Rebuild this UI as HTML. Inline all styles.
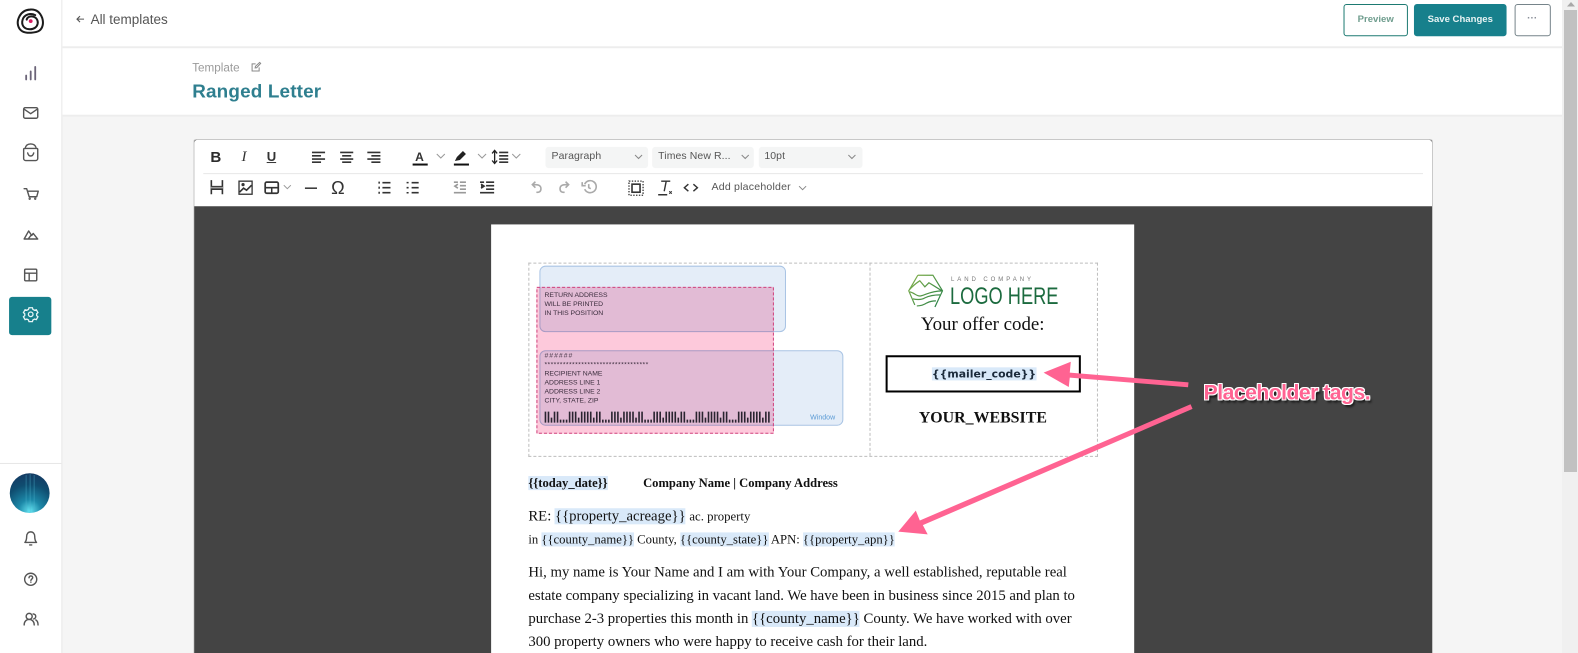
<!DOCTYPE html>
<html lang="en"><head><meta charset="utf-8"><title>Ranged Letter</title>
<style>
html,body{margin:0;padding:0;width:1578px;height:653px;overflow:hidden;background:#f5f5f5}
body{position:relative;font-family:"Liberation Sans",sans-serif;color:#444}
#w{position:absolute;left:0;top:0;width:1568px;height:650px;transform:scale(1.00638);transform-origin:0 0;filter:blur(.3px)}
.a{position:absolute;white-space:nowrap}
svg{position:absolute;overflow:visible}
.ic{fill:none;stroke:#555;stroke-width:1.4;stroke-linecap:round;stroke-linejoin:round}
.tb{fill:none;stroke:#333;stroke-width:1.6}
.serif{font-family:"Liberation Serif",serif;color:#111}
.tag{background:#d9e9f9}
.sel{background:#f4f5f5;border-radius:3px;height:20.5px;top:146px;font-size:10.4px;line-height:20px;color:#555;letter-spacing:.1px}
.env{font-size:6.8px;line-height:8.9px;color:#3a2c3c;font-family:"Liberation Sans",sans-serif}
</style></head><body>
<div id="w">

<!-- sidebar -->
<div class="a" style="left:0;top:0;width:61px;height:653px;background:#fff;border-right:1px solid #e6e6e6"></div>
<div class="a" style="left:0;top:460px;width:61px;height:1px;background:#e6e6e6"></div>
<svg style="left:0;top:0" width="61" height="653" viewBox="0 0 61 653">
<g fill="none" stroke="#1b1b1b" stroke-width="2" stroke-linecap="round"><path d="M30 9.5c6-.5 10 3 12 8.500 1.500 5 .5 10-3 12.500-3.500 2.200-12.500 3-17 .5-4-2.500-5.500-8-3.500-13 2-5 6-8.200 11.500-8.500z"/><path d="M35 15c-5-2.500-11-.5-12.500 4.500-1.500 5 1 9 6 9.500 5 .5 8.500-2 9-6 .3-3-1.500-5.500-4.500-6.500-3-.8-6 .5-6.500 3"/></g>
<circle cx="30.500" cy="21" r="1.900" fill="#d81b60"/>
<g class="ic" stroke="#5f5f6b">
<path d="M26 79v-4M30.500 79v-8M35 79V66.500" stroke="#6b6478" stroke-width="1.800"/>
<rect x="23.500" y="107" width="14" height="10.500" rx="1.500"/><path d="M24 108.500l6.500 4.500 6.500-4.500"/>
<path d="M24.500 147.500h12a1 1 0 0 1 1 1v9a2 2 0 0 1-2 2h-10a2 2 0 0 1-2-2v-9a1 1 0 0 1 1-1z"/><path d="M25 147.500c.5-3 2.500-4.500 5.500-4.500s5 1.500 5.500 4.500M27.500 152c.5 2 1.700 3 3 3s2.500-1 3-3"/>
<path d="M24 187.500h2.500l2.500 8h7.500l1.500-5.500h-10.700"/><circle cx="29.500" cy="197.500" r=".5"/><circle cx="35" cy="197.500" r=".5"/>
<path d="M24 237.500l4.500-8 3 4.500 1.500-2 4.500 5.500zM28 237.500l3-4"/>
<rect x="24.500" y="267.500" width="12" height="11.500" rx="1"/><path d="M24.500 271.500h12M29 271.500v7.500"/>
<path d="M30.500 528.500c-2.500 0-4 2-4 4.500 0 3-.8 5-1.800 6h11.600c-1-1-1.800-3-1.800-6 0-2.500-1.500-4.500-4-4.500z"/><path d="M29.500 541.500h2"/>
<circle cx="30.500" cy="575.600" r="6"/><path d="M28.800 574.100c.2-1.200 1-1.800 1.900-1.800 1 0 1.800.7 1.800 1.700 0 1.300-1.800 1.500-1.800 2.800M30.700 578.400v.2"/>
<circle cx="29" cy="612.500" r="3"/><path d="M24 621c0-3.500 2.200-5.500 5-5.500s5 2 5 5.500M33 610c1.800.2 2.500 1.300 2.500 2.500s-.8 2.200-2 2.500M35.500 616c1.500.8 2.300 2.500 2.300 5"/>
</g>
<rect x="9" y="295" width="42" height="38" rx="3" fill="#17808c"/>
<g fill="none" stroke="#e6f4f5" stroke-width="1.300" transform="translate(0 -1.700)"><circle cx="30.500" cy="314" r="2.300"/><path d="M28.800 307.500h3.400l.5 1.700 1.600.8 1.800-.5 1.600 2.800-1.300 1.200v1.800l1.300 1.200-1.600 2.800-1.800-.5-1.600.8-.5 1.700h-3.400l-.5-1.700-1.600-.8-1.800.5-1.600-2.800 1.300-1.200v-1.800l-1.300-1.200 1.600-2.800 1.800.5 1.600-.8z"/></g>
<defs><radialGradient id="av" cx=".5" cy=".95" r=".95"><stop offset="0" stop-color="#64e4f2"/><stop offset=".3" stop-color="#1c88a8"/><stop offset=".7" stop-color="#0f4d70"/><stop offset="1" stop-color="#143a63"/></radialGradient></defs>
<circle cx="29.500" cy="490" r="19.800" fill="url(#av)"/>
<path d="M26 472v36M30 471v38M34 472v36" stroke="#4fb3cc" stroke-opacity=".3" stroke-width="1.300"/>
</svg>

<!-- top bar -->
<div class="a" style="left:62px;top:0;width:1492px;height:46px;background:#fff;border-bottom:2px solid #ededed"></div>
<div class="a" style="left:62px;top:48px;width:1492px;height:66px;background:#fff;border-bottom:2px solid #ededed"></div>
<svg style="left:75px;top:14px" width="10" height="10" viewBox="0 0 10 10"><path d="M8.500 5H1.500M4.500 2 1.500 5l3 3" fill="none" stroke="#555" stroke-width="1.100"/></svg>
<div class="a" style="left:90px;top:12px;font-size:13.4px;line-height:16px;color:#555">All templates</div>
<div class="a" style="left:191px;top:61px;font-size:11.6px;line-height:14px;color:#9a9a9a">Template</div>
<svg style="left:249px;top:61px" width="11" height="11" viewBox="0 0 11 11"><path d="M8.500 6v3.500h-7v-7H5M4.500 6.500l.3-1.500L9 1l1 1-4 4.300z" fill="none" stroke="#888" stroke-width="1"/></svg>
<div class="a" style="left:191px;top:79px;font-size:18.8px;line-height:24px;font-weight:bold;color:#2f7f8f;letter-spacing:.15px">Ranged Letter</div>

<div class="a" style="left:1335px;top:4px;width:62px;height:30px;border:1px solid #1d7a72;border-radius:3px;background:#fff;text-align:center;font-size:9.500px;line-height:30px;font-weight:bold;color:#6f9d8e">Preview</div>
<div class="a" style="left:1405px;top:4px;width:92px;height:32px;border-radius:3px;background:#17808c;text-align:center;font-size:9.500px;line-height:31px;font-weight:bold;color:#e8f3f4">Save Changes</div>
<div class="a" style="left:1504.500px;top:4px;width:34px;height:30px;border:1px solid #76848a;border-radius:3px;background:#fff;text-align:center;font-size:10px;line-height:28px;font-weight:bold;color:#8a8f99">···</div>

<!-- editor -->
<div class="a" style="left:192px;top:137.500px;width:1230px;height:516px;background:#444;border:1px solid #cfcfcf;border-bottom:0;border-radius:3px 3px 0 0;box-sizing:content-box"></div>
<div class="a" style="left:193px;top:138.500px;width:1230px;height:66px;background:#fff;border-radius:3px 3px 0 0"></div>
<div class="a" style="left:202px;top:171.500px;width:1212px;height:1px;background:#e8e8e8"></div>

<!-- toolbar -->
<div class="a" style="left:209px;top:148px;font-size:15px;line-height:17px;font-weight:bold;color:#2c2c2c">B</div>
<div class="a serif" style="left:240px;top:148px;font-size:15px;line-height:17px;font-style:italic;color:#333">I</div>
<div class="a" style="left:265px;top:148px;font-size:13px;line-height:15px;font-weight:bold;color:#333;text-decoration:underline">U</div>
<svg style="left:0;top:0" width="1000" height="205" viewBox="0 0 1000 205">
<g class="tb" stroke-width="1.400">
<path d="M310 151.500h13M310 154.800h9M310 158h13M310 161.200h9"/>
<path d="M338 151.500h13M340 154.800h9M338 158h13M340 161.200h9"/>
<path d="M365 151.500h13M369 154.800h9M365 158h13M369 161.200h9"/>
<path d="M434 153l4 4 4-4M475 153l4 4 4-4M509 153l4 4 4-4M282 184l3.500 3.500 3.500-3.500" stroke="#999" stroke-width="1"/>
<path d="M496 151.500h9M496 154.800h9M496 158h9M496 161.200h9"/>
</g>
<path d="M410 163.500h15" stroke="#111" stroke-width="2"/>
<text x="412.500" y="160" font-family="Liberation Sans" font-size="12" font-weight="bold" fill="#333">A</text>
<path d="M451 163.500h15" stroke="#111" stroke-width="2"/>
<path d="M452 160l2-4 6-6 3 3-6 6zM452 160.500h3" fill="#222"/>
<path d="M491.500 150v12M489 152.500l2.500-3 2.500 3M489 159.500l2.500 3 2.500-3" fill="none" stroke="#222" stroke-width="1.300"/>
<!-- row 2 -->
<g class="tb" stroke-width="1.300">
<path d="M210 179v6.500h11V179M210 193v-5h11v5" />
<path d="M209 186.500h13" stroke="#999"/>
<rect x="237.500" y="180" width="13" height="13" stroke-width="1.300"/><path d="M238 191l4-4 3 2 5-5"/><circle cx="241.500" cy="183.500" r=".8"/>
<rect x="263.500" y="181" width="13" height="11" rx="1.500" stroke-width="1.700"/><path d="M263.500 186.500h13M270 186.500v5.500" stroke-width="1.500"/>
<path d="M303 187h12" stroke-width="1.500"/>
<path d="M380 181.500h8M380 186.500h8M380 191.500h8M409 181.500h7M409 186.500h7M409 191.500h7"/>
<path d="M376 181.500h1.500M376 186.500h1.500M376 191.500h1.500" stroke-width="2"/>
<path d="M404 181.500h2M404 186.500h2M404 191.500h2" stroke-width="1.500"/>
<path d="M457 181h6M457 184.500h6M457 188h6M451 191.500h12M451 181h4" stroke="#999"/><path d="M455 183l-3 2 3 2" stroke="#999"/>
<path d="M483 181h8M483 184.500h8M483 188h8M477 191.500h14M477 181h4"/><path d="M478 183l3 2-3 2" fill="#333"/>
<g stroke="#aaa"><path d="M533 191c3 .5 4.500-1 4.500-3.500 0-3-2.500-4-5-4h-3M532 180.500l-3 3 3 3"/>
<path d="M553 191c-3 .5-4.500-1-4.500-3.500 0-3 2.500-4 5-4h3M554 180.500l3 3-3 3" transform="translate(8 0)"/>
<path d="M581 183a6 6 0 1 1 0 5M578.500 181v3.500h3.500M585 183v3.500l2 1"/></g>
<rect x="628" y="183" width="8" height="8" stroke-width="1.600"/>
<rect x="625" y="180" width="14" height="14" stroke-dasharray="1.400 1.400" stroke-width="1.300"/>
<path d="M657 180h9M662 180l-2 10M654 193.500h9" stroke-width="1.400"/>
<path d="M665 190l2.500 2.500M667.500 190l-2.500 2.500" stroke-width="1"/>
<path d="M684 183l-4 3.500 4 3.500M689 183l4 3.500-4 3.500" stroke-width="1.400"/>
<path d="M794 185l3.500 3.500 3.500-3.500" stroke="#888" stroke-width="1"/>
</g>
<text x="329" y="193" font-family="Liberation Sans" font-size="18" fill="#333">Ω</text>
</svg>
<div class="a" style="left:707px;top:179px;font-size:10.500px;line-height:14px;color:#555;letter-spacing:.2px">Add placeholder</div>
<div class="a sel" style="left:542px;width:96px;padding-left:6px;">Paragraph</div>
<div class="a sel" style="left:648px;width:95px;padding-left:6px;">Times New R...</div>
<div class="a sel" style="left:753.500px;width:97px;padding-left:6px;">10pt</div>
<svg style="left:0;top:0" width="900" height="205"><path d="M631 154l3.500 3.500 3.500-3.500M737 154l3.500 3.500 3.500-3.500M843 154l3.500 3.500 3.500-3.500" fill="none" stroke="#888" stroke-width="1"/></svg>

<!-- paper -->
<div class="a" style="left:488px;top:223px;width:639px;height:430px;background:#fff"></div>
<div class="a" style="left:525px;top:261px;width:564px;height:191px;border:1px dashed #bdbdbd;box-sizing:content-box"></div>
<div class="a" style="left:864px;top:261px;width:0;height:192px;border-left:1px dashed #bdbdbd"></div>

<div class="a" style="left:536px;top:264px;width:243px;height:64px;background:#e4edf8;border:1px solid #a9c4e4;border-radius:6px;box-sizing:content-box"></div>
<div class="a" style="left:536px;top:348px;width:300px;height:73px;background:#e4edf8;border:1px solid #a9c4e4;border-radius:6px;box-sizing:content-box"></div>
<div class="a" style="left:533px;top:285px;width:236px;height:146px;background:#fdc9db;mix-blend-mode:multiply"></div>
<svg style="left:533px;top:285px" width="236" height="146"><rect x=".5" y=".5" width="235" height="145" fill="none" stroke="#d0437e" stroke-width="1" stroke-dasharray="3 2"/></svg>
<div class="a env" style="left:541px;top:290px">RETURN ADDRESS<br>WILL BE PRINTED<br>IN THIS POSITION</div>
<div class="a env" style="left:541px;top:350px;"><span style="letter-spacing:1px">######</span><br><span style="letter-spacing:.4px">**********************************</span><br>RECIPIENT NAME<br>ADDRESS LINE 1<br>ADDRESS LINE 2<br>CITY, STATE, ZIP</div>
<div class="a" style="left:805px;top:411px;font-size:7px;line-height:9px;color:#5b9bd5">Window</div>
<svg style="left:541px;top:408px" width="230" height="13" viewBox="0 0 230 13"><path stroke="#2a2430" stroke-width="1.600" d="M1 1v11M4 1v11M7 7v5M10 1v11M13 1v11M16 9v3M19 9v3M22 9v3M25 1v11M28 1v11M31 1v11M34 7v5M37 1v11M40 1v11M43 1v11M46 1v11M49 7v5M52 1v11M55 1v11M58 9v3M61 9v3M64 9v3M67 1v11M70 1v11M73 1v11M76 7v5M79 1v11M82 1v11M85 1v11M88 1v11M91 7v5M94 1v11M97 1v11M100 9v3M103 9v3M106 9v3M109 1v11M112 1v11M115 1v11M118 7v5M121 1v11M124 1v11M127 1v11M130 1v11M133 7v5M136 1v11M139 1v11M142 9v3M145 9v3M148 9v3M151 1v11M154 1v11M157 1v11M160 7v5M163 1v11M166 1v11M169 1v11M172 1v11M175 7v5M178 1v11M181 1v11M184 9v3M187 9v3M190 9v3M193 1v11M196 1v11M199 1v11M202 7v5M205 1v11M208 1v11M211 1v11M214 1v11M217 7v5M220 1v11M223 1v11"/></svg>

<!-- logo -->
<svg style="left:902px;top:272px" width="36" height="36" viewBox="0 0 36 36"><defs><linearGradient id="lg" gradientUnits="userSpaceOnUse" x1="0" y1="0" x2="36" y2="34"><stop offset="0" stop-color="#8ab44a"/><stop offset="1" stop-color="#1d7a45"/></linearGradient></defs>
<g fill="none" stroke="url(#lg)" stroke-width="1.200"><path d="M10 1.500h15l9.500 15.500L27 33M7 31 1 17 10 1.500"/><path d="M1.500 16C7 10 9 9 12 7l5 6 4-4 5 3 8 5M2 18c5 1 7 5 11 4 5-1 10-5 21-5M5 25c5 1 9 1 12-1 4-2 9-3 15-3M9 32c4 0 7-1 10-3 3-1.500 6-2 9-2"/></g></svg>
<div class="a" style="left:945px;top:274px;font-size:6px;line-height:8px;letter-spacing:2.900px;color:#777">LAND COMPANY</div>
<div class="a" style="left:944px;top:282px;font-size:24px;line-height:26px;color:#1c6b3f;transform:scaleX(.755);transform-origin:0 0;">LOGO HERE</div>

<div class="a serif" style="left:915px;top:312px;font-size:18.8px;line-height:21px">Your offer code:</div>
<div class="a" style="left:880px;top:353px;width:190px;height:33px;border:2.500px solid #000"></div>
<div class="a" style="left:926px;top:363.500px;font-family:'DejaVu Sans',sans-serif;font-size:10.800px;line-height:15px;font-weight:bold;color:#1b2a3a"><span class="tag">{{mailer_code}}</span></div>
<div class="a serif" style="left:913px;top:407px;font-size:15.8px;line-height:18px;font-weight:bold">YOUR_WEBSITE</div>

<!-- letter -->
<div class="a serif" style="left:525px;top:472px;font-size:12.5px;line-height:16px;font-weight:bold"><span class="tag">{{today_date}}</span></div>
<div class="a serif" style="left:639px;top:472px;font-size:12.5px;line-height:16px;font-weight:bold">Company Name | Company Address</div>
<div class="a serif" style="left:525px;top:504px;font-size:14.67px;line-height:18px">RE: <span class="tag">{{property_acreage}}</span> <span style="font-size:12.7px">ac. property</span></div>
<div class="a serif" style="left:525px;top:528px;font-size:12.6px;line-height:17px">in <span class="tag">{{county_name}}</span> County, <span class="tag">{{county_state}}</span> APN: <span class="tag">{{property_apn}}</span></div>
<div class="a serif" style="left:525px;top:558px;font-size:14.67px;line-height:23px">Hi, my name is Your Name and I am with Your Company, a well established, reputable real<br>estate company specializing in vacant land. We have been in business since 2015 and plan to<br>purchase 2-3 properties this month in <span class="tag">{{county_name}}</span> County. We have worked with over<br>300 property owners who were happy to receive cash for their land.</div>

<!-- annotation -->
<svg style="left:0;top:0" width="1568" height="650" viewBox="0 0 1568 650">
<g fill="#ff6392"><path d="M1037 370.300 1064 359.400 1063 370.300 1181 380 1180.500 384.800 1063 375.200 1062 384.600z"/><path d="M892.600 528.300 910 507.400 914 517.200 1183 401.700 1185 406.300 917 521.800 921.800 531z"/></g>
</svg>
<div class="a" style="left:1196px;top:377.500px;font-size:21px;line-height:26px;font-weight:bold;color:#ff6392;letter-spacing:-.5px;text-shadow:-1px 0 #fff,1px 0 #fff,0 -1px #fff,0 1px #fff,1px 1px #fff,-1px -1px #fff,1px -1px #fff,-1px 1px #fff,2px 3px 2px rgba(0,0,0,.7)">Placeholder tags.</div>
</div>

<!-- scrollbar -->
<div class="a" style="left:1562px;top:0;width:16px;height:653px;background:#f0f0f0"></div>
<div class="a" style="left:1564px;top:10px;width:13px;height:462px;background:#c1c1c1"></div>
<svg style="left:1566px;top:1px" width="10" height="7"><path d="M5 1 9 5.500H1z" fill="#a8a8a8"/></svg>
</body></html>
